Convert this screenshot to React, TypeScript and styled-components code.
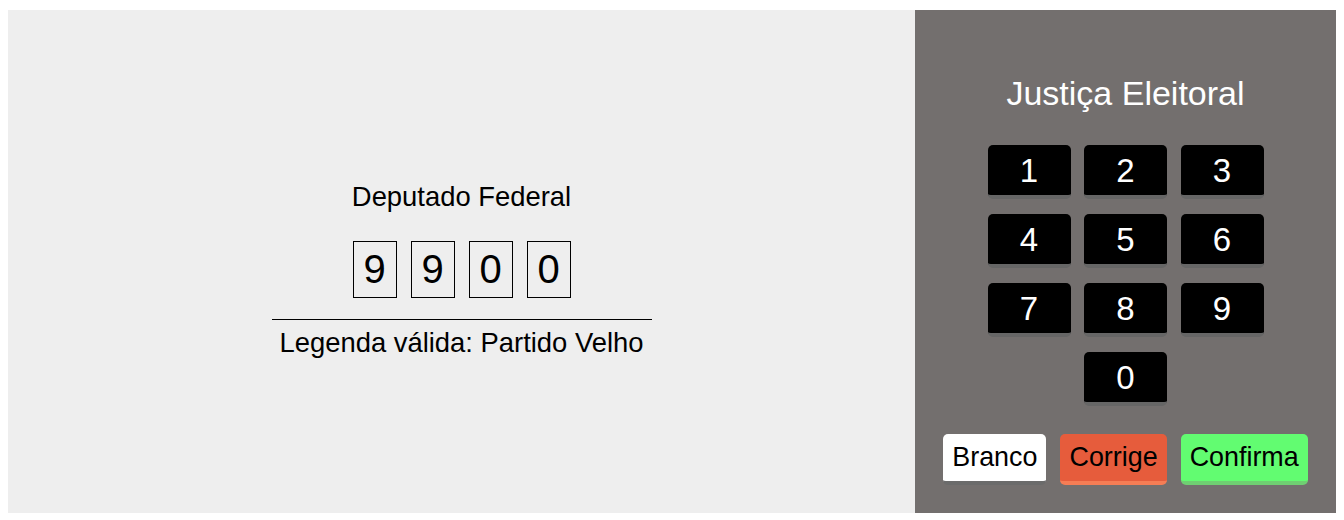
import React from "react";
import styled, { createGlobalStyle } from "styled-components";

const Global = createGlobalStyle`
  body {
    margin: 10px 8px 7px 8px;
    font-family: "Liberation Sans", Arial, sans-serif;
  }
`;

const Urna = styled.div`
  display: grid;
  grid-template-columns: 907px 421px;
  height: 503px;
`;

const Screen = styled.div`
  background: #eeeeee;
  display: flex;
  flex-direction: column;
  align-items: center;
  padding-top: 172px;
  box-sizing: border-box;
`;

const Title = styled.div`
  font-size: 27.4px;
  line-height: 30px;
  color: #000;
`;

const Digits = styled.div`
  display: flex;
  gap: 14px;
  margin-top: 29px;
`;

const DigitBox = styled.div`
  width: 42px;
  height: 55px;
  border: 1px solid #000;
  display: flex;
  align-items: center;
  justify-content: center;
  font-size: 40px;
  color: #000;
`;

const Rule = styled.div`
  width: 380px;
  height: 1px;
  background: #000;
  margin-top: 21px;
`;

const Legend = styled.div`
  font-size: 27.4px;
  line-height: 30px;
  margin-top: 8px;
  color: #000;
`;

const Panel = styled.div`
  background: #736f6e;
  display: flex;
  flex-direction: column;
  align-items: center;
  padding-top: 64px;
  box-sizing: border-box;
`;

const Brand = styled.div`
  color: #fff;
  font-size: 34px;
  line-height: 38px;
`;

const Keypad = styled.div`
  display: grid;
  grid-template-columns: repeat(3, 83px);
  column-gap: 13.5px;
  row-gap: 15px;
  margin-top: 33px;
`;

const Key = styled.div<{ $col?: number }>`
  grid-column: ${(p) => p.$col ?? "auto"};
  height: 48px;
  padding-top: 2px;
  background: #000;
  border-radius: 5px;
  border-bottom: 4px solid #666;
  color: #fff;
  font-size: 33px;
  display: flex;
  align-items: center;
  justify-content: center;
`;

const Actions = styled.div`
  display: flex;
  gap: 14px;
  margin-top: 28px;
`;

const Action = styled.div<{ $bg: string; $edge: string }>`
  background: ${(p) => p.$bg};
  border-bottom: 4px solid ${(p) => p.$edge};
  border-radius: 5px;
  height: 47px;
  padding: 0 9px;
  display: flex;
  align-items: center;
  font-size: 26.9px;
  color: #000;
`;

export default function App() {
  const keys = ["1", "2", "3", "4", "5", "6", "7", "8", "9"];
  return (
    <>
      <Global />
      <Urna>
        <Screen>
          <Title>Deputado Federal</Title>
          <Digits>
            {["9", "9", "0", "0"].map((d, i) => (
              <DigitBox key={i}>{d}</DigitBox>
            ))}
          </Digits>
          <Rule />
          <Legend>Legenda válida: Partido Velho</Legend>
        </Screen>
        <Panel>
          <Brand>Justiça Eleitoral</Brand>
          <Keypad>
            {keys.map((k) => (
              <Key key={k}>{k}</Key>
            ))}
            <Key $col={2}>0</Key>
          </Keypad>
          <Actions>
            <Action $bg="#ffffff" $edge="#6b6b6b">Branco</Action>
            <Action $bg="#e65c3c" $edge="#f57d55">Corrige</Action>
            <Action $bg="#62fc71" $edge="#6fcf72">Confirma</Action>
          </Actions>
        </Panel>
      </Urna>
    </>
  );
}
